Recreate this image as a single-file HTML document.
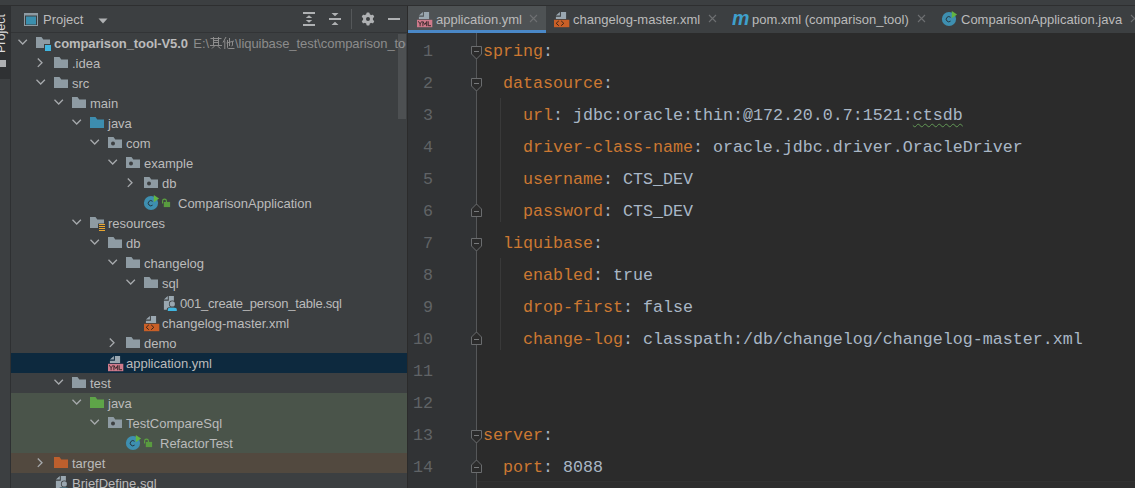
<!DOCTYPE html>
<html><head><meta charset="utf-8">
<style>
html,body{margin:0;padding:0}
body{width:1135px;height:488px;overflow:hidden;position:relative;background:#3c3f41;font-family:"Liberation Sans",sans-serif;}
.abs{position:absolute}
.ic{position:absolute;display:block}
.ic svg{display:block}
.rowbg{position:absolute;left:11px;width:396px;height:20px}
.tt{position:absolute;height:20px;line-height:20px;font-size:13px;color:#bbbbbb;white-space:nowrap}
.tt b{font-weight:bold}
.tt .path{color:#8c8c8c;letter-spacing:-0.06px}
.tt b{letter-spacing:-0.1px}
.ln{position:absolute;left:408px;width:25px;text-align:right;height:32px;line-height:32px;font-family:"Liberation Mono",monospace;font-size:16.6667px;color:#606366}
.cl{position:absolute;left:483px;height:32px;line-height:32px;font-family:"Liberation Mono",monospace;font-size:16.6667px;color:#a9b7c6;white-space:pre}
.typo{text-decoration:underline wavy #629755;text-decoration-thickness:1px;text-underline-offset:3px}
.tab{position:absolute;top:6px;height:27px;font-size:13px;color:#bbbbbb;line-height:27px;white-space:nowrap}
</style></head>
<body>
<!-- top strip line -->
<div class="abs" style="left:0;top:5px;width:1135px;height:1px;background:#2e2f30"></div>
<!-- left sidebar -->
<div class="abs" style="left:0;top:6px;width:10px;height:73px;background:#2f3133"></div>
<div class="abs" style="left:10px;top:6px;width:1px;height:482px;background:#2e3032"></div>
<div class="abs" style="left:-5px;top:53px;transform-origin:0 0;transform:rotate(-90deg);font-size:12.5px;color:#dcdcdc;line-height:13px;white-space:nowrap">Project</div>
<div class="abs" style="left:0;top:60px;width:6px;height:7px;background:#aeb0b2"></div>

<!-- project panel header -->
<div class="abs" style="left:11px;top:32px;width:396px;height:1px;background:#323436"></div>
<svg class="ic" style="left:23px;top:12px" width="16" height="16"><rect x="1.5" y="1.5" width="13" height="12" fill="none" stroke="#8e9ba3" stroke-width="1"/><rect x="1" y="1" width="14" height="2.5" fill="#8e9ba3"/><rect x="3" y="4.5" width="10" height="8" fill="#3b8fae"/></svg>
<div class="abs" style="left:43px;top:7px;line-height:26px;font-size:13px;color:#bbbbbb">Project</div>
<svg class="ic" style="left:98px;top:18px" width="10" height="6"><path d="M0.5 0.5H9.5L5 5.5Z" fill="#afb1b3"/></svg>
<!-- header icons -->
<svg class="ic" style="left:302px;top:11px" width="14" height="16"><rect x="1" y="1" width="12" height="2" fill="#afb1b3"/><rect x="1" y="13" width="12" height="2" fill="#afb1b3"/><path d="M3.8 7L7 4.3L10.2 7Z M3.8 9L7 11.7L10.2 9Z" fill="#afb1b3"/></svg>
<svg class="ic" style="left:328px;top:12px" width="14" height="14"><rect x="1" y="6" width="12" height="2" fill="#afb1b3"/><path d="M3.5 1H10.5L7 4.2Z M3.5 13H10.5L7 9.8Z" fill="#afb1b3"/></svg>
<div class="abs" style="left:351px;top:9px;width:1px;height:20px;background:#55585a"></div>
<svg class="ic" style="left:360px;top:11px" width="16" height="16"><g transform="translate(8,8)" fill="#afb1b3"><circle r="5"/><rect x="-1.6" y="-6.6" width="3.2" height="13.2" rx="1"/><rect x="-1.6" y="-6.6" width="3.2" height="13.2" rx="1" transform="rotate(60)"/><rect x="-1.6" y="-6.6" width="3.2" height="13.2" rx="1" transform="rotate(120)"/></g><circle cx="8" cy="8" r="2" fill="#3c3f41"/></svg>
<div class="abs" style="left:388px;top:18px;width:12px;height:2px;background:#afb1b3"></div>

<!-- tree -->
<svg class="ic" style="left:18px;top:39px" width="10" height="7"><polyline points="0.5,0.8 4.7,5 8.9,0.8" fill="none" stroke="#a7aaad" stroke-width="1.3"/></svg>
<div class="ic" style="left:36px;top:37px"><svg width="16" height="16"><path d="M0 0H5.5L7.3 2.5H14V7H8V11H0Z" fill="#8e9ba3"/><rect x="9" y="8" width="6" height="6" fill="#40b6e0"/></svg></div>
<div class="tt" style="left:54px;top:34px;width:352px;overflow:hidden"><b>comparison_tool-V5.0</b><span class="path" style="margin-left:5.5px">E:\<svg style="display:inline-block;vertical-align:-1px;margin:0 0 0 1px" width="25" height="12"><g fill="none" stroke="#8c8c8c" stroke-width="1"><path d="M0.5 1.5H11.5M3.5 0V8M8.5 0V8M3.5 3.5H8.5M3.5 5.5H8.5M0 8.5H12M4.5 9L2 11.5M7.5 9L10.5 11.5"/><path d="M16 0L13 5.5M14.8 3.5V12M16.5 6L24 4M19.5 1V9M17.5 3V10.5Q17.5 11.5 18.5 11.5H24.5M22.5 4.5V8Q22.5 9 21.5 9"/></g></svg>\liquibase_test\comparison_tool</span></div>
<svg class="ic" style="left:37px;top:58px" width="7" height="10"><polyline points="0.8,0.5 5,4.7 0.8,8.9" fill="none" stroke="#a7aaad" stroke-width="1.3"/></svg>
<div class="ic" style="left:54px;top:57px"><svg width="16" height="14"><path d="M0 0H5.5L7.3 2.5H14V11H0Z" fill="#8e9ba3"/></svg></div>
<div class="tt" style="left:72px;top:54px">.idea</div>
<svg class="ic" style="left:36px;top:79px" width="10" height="7"><polyline points="0.5,0.8 4.7,5 8.9,0.8" fill="none" stroke="#a7aaad" stroke-width="1.3"/></svg>
<div class="ic" style="left:54px;top:77px"><svg width="16" height="14"><path d="M0 0H5.5L7.3 2.5H14V11H0Z" fill="#8e9ba3"/></svg></div>
<div class="tt" style="left:72px;top:74px">src</div>
<svg class="ic" style="left:54px;top:99px" width="10" height="7"><polyline points="0.5,0.8 4.7,5 8.9,0.8" fill="none" stroke="#a7aaad" stroke-width="1.3"/></svg>
<div class="ic" style="left:72px;top:97px"><svg width="16" height="14"><path d="M0 0H5.5L7.3 2.5H14V11H0Z" fill="#8e9ba3"/></svg></div>
<div class="tt" style="left:90px;top:94px">main</div>
<svg class="ic" style="left:72px;top:119px" width="10" height="7"><polyline points="0.5,0.8 4.7,5 8.9,0.8" fill="none" stroke="#a7aaad" stroke-width="1.3"/></svg>
<div class="ic" style="left:90px;top:117px"><svg width="16" height="14"><path d="M0 0H5.5L7.3 2.5H14V11H0Z" fill="#3d8daf"/></svg></div>
<div class="tt" style="left:108px;top:114px">java</div>
<svg class="ic" style="left:90px;top:139px" width="10" height="7"><polyline points="0.5,0.8 4.7,5 8.9,0.8" fill="none" stroke="#a7aaad" stroke-width="1.3"/></svg>
<div class="ic" style="left:108px;top:137px"><svg width="16" height="14"><path d="M0 0H5.5L7.3 2.5H14V11H0Z" fill="#8e9ba3"/><circle cx="5" cy="6.5" r="2" fill="#3c3f41"/></svg></div>
<div class="tt" style="left:126px;top:134px">com</div>
<svg class="ic" style="left:108px;top:159px" width="10" height="7"><polyline points="0.5,0.8 4.7,5 8.9,0.8" fill="none" stroke="#a7aaad" stroke-width="1.3"/></svg>
<div class="ic" style="left:126px;top:157px"><svg width="16" height="14"><path d="M0 0H5.5L7.3 2.5H14V11H0Z" fill="#8e9ba3"/><circle cx="5" cy="6.5" r="2" fill="#3c3f41"/></svg></div>
<div class="tt" style="left:144px;top:154px">example</div>
<svg class="ic" style="left:127px;top:178px" width="7" height="10"><polyline points="0.8,0.5 5,4.7 0.8,8.9" fill="none" stroke="#a7aaad" stroke-width="1.3"/></svg>
<div class="ic" style="left:144px;top:177px"><svg width="16" height="14"><path d="M0 0H5.5L7.3 2.5H14V11H0Z" fill="#8e9ba3"/><circle cx="5" cy="6.5" r="2" fill="#3c3f41"/></svg></div>
<div class="tt" style="left:162px;top:174px">db</div>

<div class="ic" style="left:143px;top:194px"><svg width="30" height="17"><circle cx="8" cy="9" r="7.1" fill="#3e8fb0"/><path d="M9.6 7.3A2.6 2.6 0 1 0 9.6 11.1" fill="none" stroke="#253640" stroke-width="1"/><path d="M10.8 1V8.2L16.1 4.6Z" fill="#62b543"/><path d="M19.6 9.5V7A1.9 1.9 0 0 1 23.4 7V8.5" fill="none" stroke="#5da540" stroke-width="1.1"/><rect x="20.8" y="7.9" width="6.3" height="5.2" fill="#599b3f"/></svg></div>
<div class="tt" style="left:178px;top:194px">ComparisonApplication</div>
<svg class="ic" style="left:72px;top:219px" width="10" height="7"><polyline points="0.5,0.8 4.7,5 8.9,0.8" fill="none" stroke="#a7aaad" stroke-width="1.3"/></svg>
<div class="ic" style="left:90px;top:217px"><svg width="16" height="16"><path d="M0 0H5.5L7.3 2.5H14V6.5H8V11H0Z" fill="#8e9ba3"/><path d="M9 7.5H15M9 9.5H15M9 11.5H15M9 13.5H15" stroke="#e9a630" stroke-width="1.1"/></svg></div>
<div class="tt" style="left:108px;top:214px">resources</div>
<svg class="ic" style="left:90px;top:239px" width="10" height="7"><polyline points="0.5,0.8 4.7,5 8.9,0.8" fill="none" stroke="#a7aaad" stroke-width="1.3"/></svg>
<div class="ic" style="left:108px;top:237px"><svg width="16" height="14"><path d="M0 0H5.5L7.3 2.5H14V11H0Z" fill="#8e9ba3"/></svg></div>
<div class="tt" style="left:126px;top:234px">db</div>
<svg class="ic" style="left:108px;top:259px" width="10" height="7"><polyline points="0.5,0.8 4.7,5 8.9,0.8" fill="none" stroke="#a7aaad" stroke-width="1.3"/></svg>
<div class="ic" style="left:126px;top:257px"><svg width="16" height="14"><path d="M0 0H5.5L7.3 2.5H14V11H0Z" fill="#8e9ba3"/></svg></div>
<div class="tt" style="left:144px;top:254px">changelog</div>
<svg class="ic" style="left:126px;top:279px" width="10" height="7"><polyline points="0.5,0.8 4.7,5 8.9,0.8" fill="none" stroke="#a7aaad" stroke-width="1.3"/></svg>
<div class="ic" style="left:144px;top:277px"><svg width="16" height="14"><path d="M0 0H5.5L7.3 2.5H14V11H0Z" fill="#8e9ba3"/></svg></div>
<div class="tt" style="left:162px;top:274px">sql</div>

<div class="ic" style="left:162px;top:293px"><svg width="18" height="20"><path d="M6.8 3H11.9V16.8H1.9V7.8H6.8Z M1.9 6.6L5.8 3.1V6.6Z" fill="#9aa7b0"/><circle cx="10.3" cy="10.9" r="3.4" fill="#3c3f41"/><circle cx="10.3" cy="10.9" r="2.6" fill="#9aa7b0"/><path d="M4.8 19V16.8A2.5 2.5 0 0 1 7.3 14.2H13.2A2.5 2.5 0 0 1 15.7 16.8V19Z" fill="#3c3f41"/><path d="M5.8 18V16.6A1.8 1.8 0 0 1 7.6 14.8H13A1.8 1.8 0 0 1 14.8 16.6V18Z" fill="#40b6e0"/></svg></div>
<div class="tt" style="left:180px;top:294px;letter-spacing:-0.22px">001_create_person_table.sql</div>

<div class="ic" style="left:144px;top:315px"><svg width="17" height="17"><path d="M6.9 1H12.1V8H1.9V5.8H6.9Z M1.9 4.5L5.9 1.1V4.5Z" fill="#9aa7b0"/><rect x="0" y="8.8" width="15.3" height="7.4" fill="#c95f27"/><path d="M4.8 9.9L2.2 12.3L4.8 14.7M7.2 9.9L9.8 12.3L7.2 14.7" fill="none" stroke="#3a2418" stroke-width="1"/></svg></div>
<div class="tt" style="left:162px;top:314px">changelog-master.xml</div>
<svg class="ic" style="left:109px;top:338px" width="7" height="10"><polyline points="0.8,0.5 5,4.7 0.8,8.9" fill="none" stroke="#a7aaad" stroke-width="1.3"/></svg>
<div class="ic" style="left:126px;top:337px"><svg width="16" height="14"><path d="M0 0H5.5L7.3 2.5H14V11H0Z" fill="#8e9ba3"/></svg></div>
<div class="tt" style="left:144px;top:334px">demo</div>
<div class="rowbg" style="top:353px;background:#0d293e"></div>

<div class="ic" style="left:108px;top:355px"><svg width="17" height="17"><path d="M6.9 1H12.1V8H1.9V5.8H6.9Z M1.9 4.5L5.9 1.1V4.5Z" fill="#9aa7b0"/><rect x="0" y="8.8" width="15.3" height="7.4" fill="#cf7a8b"/><path d="M1.3 10.3L3.1 12.8L4.9 10.3M3.1 12.8V15.2M5.9 15.2V10.5L7.8 13.6L9.7 10.5V15.2M11.2 10.3V14.7H14" fill="none" stroke="#3b2a2e" stroke-width="1"/></svg></div>
<div class="tt" style="left:126px;top:354px">application.yml</div>
<svg class="ic" style="left:54px;top:379px" width="10" height="7"><polyline points="0.5,0.8 4.7,5 8.9,0.8" fill="none" stroke="#a7aaad" stroke-width="1.3"/></svg>
<div class="ic" style="left:72px;top:377px"><svg width="16" height="14"><path d="M0 0H5.5L7.3 2.5H14V11H0Z" fill="#8e9ba3"/></svg></div>
<div class="tt" style="left:90px;top:374px">test</div>
<div class="rowbg" style="top:393px;background:#4a544a"></div>
<svg class="ic" style="left:72px;top:399px" width="10" height="7"><polyline points="0.5,0.8 4.7,5 8.9,0.8" fill="none" stroke="#a7aaad" stroke-width="1.3"/></svg>
<div class="ic" style="left:90px;top:397px"><svg width="16" height="14"><path d="M0 0H5.5L7.3 2.5H14V11H0Z" fill="#5ea548"/></svg></div>
<div class="tt" style="left:108px;top:394px">java</div>
<div class="rowbg" style="top:413px;background:#4a544a"></div>
<svg class="ic" style="left:90px;top:419px" width="10" height="7"><polyline points="0.5,0.8 4.7,5 8.9,0.8" fill="none" stroke="#a7aaad" stroke-width="1.3"/></svg>
<div class="ic" style="left:108px;top:417px"><svg width="16" height="14"><path d="M0 0H5.5L7.3 2.5H14V11H0Z" fill="#8e9ba3"/><circle cx="5" cy="6.5" r="2" fill="#3c3f41"/></svg></div>
<div class="tt" style="left:126px;top:414px">TestCompareSql</div>
<div class="rowbg" style="top:433px;background:#4a544a"></div>

<div class="ic" style="left:125px;top:434px"><svg width="30" height="17"><circle cx="8" cy="9" r="7.1" fill="#3e8fb0"/><path d="M9.6 7.3A2.6 2.6 0 1 0 9.6 11.1" fill="none" stroke="#253640" stroke-width="1"/><path d="M10.8 1V8.2L16.1 4.6Z" fill="#62b543"/><path d="M19.6 9.5V7A1.9 1.9 0 0 1 23.4 7V8.5" fill="none" stroke="#5da540" stroke-width="1.1"/><rect x="20.8" y="7.9" width="6.3" height="5.2" fill="#599b3f"/></svg></div>
<div class="tt" style="left:160px;top:434px">RefactorTest</div>
<div class="rowbg" style="top:453px;background:#52493f"></div>
<svg class="ic" style="left:37px;top:458px" width="7" height="10"><polyline points="0.8,0.5 5,4.7 0.8,8.9" fill="none" stroke="#a7aaad" stroke-width="1.3"/></svg>
<div class="ic" style="left:54px;top:457px"><svg width="16" height="14"><path d="M0 0H5.5L7.3 2.5H14V11H0Z" fill="#bd5f2d"/></svg></div>
<div class="tt" style="left:72px;top:454px">target</div>

<div class="ic" style="left:54px;top:473px"><svg width="18" height="20"><path d="M6.8 3H11.9V16.8H1.9V7.8H6.8Z M1.9 6.6L5.8 3.1V6.6Z" fill="#9aa7b0"/><circle cx="10.3" cy="10.9" r="3.4" fill="#3c3f41"/><circle cx="10.3" cy="10.9" r="2.6" fill="#9aa7b0"/><path d="M4.8 19V16.8A2.5 2.5 0 0 1 7.3 14.2H13.2A2.5 2.5 0 0 1 15.7 16.8V19Z" fill="#3c3f41"/><path d="M5.8 18V16.6A1.8 1.8 0 0 1 7.6 14.8H13A1.8 1.8 0 0 1 14.8 16.6V18Z" fill="#40b6e0"/></svg></div>
<div class="tt" style="left:72px;top:474px">BriefDefine.sql</div>
<!-- tree scrollbar -->
<div class="abs" style="left:398px;top:34px;width:8px;height:85px;background:rgba(255,255,255,0.09)"></div>
<!-- panel/editor border -->
<div class="abs" style="left:407px;top:6px;width:1px;height:482px;background:#2b2b2b"></div>

<!-- editor -->
<div class="abs" style="left:408px;top:33px;width:727px;height:455px;background:#2b2b2b"></div>
<div class="abs" style="left:408px;top:33px;width:68px;height:455px;background:#313335"></div>
<div class="abs" style="left:476px;top:33px;width:1px;height:455px;background:#555759"></div>
<!-- indent guides -->
<div class="abs" style="left:500px;top:98px;width:1px;height:124px;background:#393939"></div>
<div class="abs" style="left:500px;top:258px;width:1px;height:92px;background:#393939"></div>
<div class="abs" style="left:477px;top:481px;width:658px;height:7px;background:#2e2e2e;border-top:1px solid #323232"></div>
<div class="ln" style="top:36px">1</div>
<div class="cl" style="top:36px"><span style="color:#cc7832">spring</span><span style="color:#a9b7c6">:</span></div>
<div class="ln" style="top:68px">2</div>
<div class="cl" style="top:68px">  <span style="color:#cc7832">datasource</span><span style="color:#a9b7c6">:</span></div>
<div class="ln" style="top:100px">3</div>
<div class="cl" style="top:100px">    <span style="color:#cc7832">url</span><span style="color:#a9b7c6">: jdbc:oracle:thin:@172.20.0.7:1521:<span class="typo">ctsdb</span></span></div>
<div class="ln" style="top:132px">4</div>
<div class="cl" style="top:132px">    <span style="color:#cc7832">driver-class-name</span><span style="color:#a9b7c6">: oracle.jdbc.driver.OracleDriver</span></div>
<div class="ln" style="top:164px">5</div>
<div class="cl" style="top:164px">    <span style="color:#cc7832">username</span><span style="color:#a9b7c6">: CTS_DEV</span></div>
<div class="ln" style="top:196px">6</div>
<div class="cl" style="top:196px">    <span style="color:#cc7832">password</span><span style="color:#a9b7c6">: CTS_DEV</span></div>
<div class="ln" style="top:228px">7</div>
<div class="cl" style="top:228px">  <span style="color:#cc7832">liquibase</span><span style="color:#a9b7c6">:</span></div>
<div class="ln" style="top:260px">8</div>
<div class="cl" style="top:260px">    <span style="color:#cc7832">enabled</span><span style="color:#a9b7c6">: true</span></div>
<div class="ln" style="top:292px">9</div>
<div class="cl" style="top:292px">    <span style="color:#cc7832">drop-first</span><span style="color:#a9b7c6">: false</span></div>
<div class="ln" style="top:324px">10</div>
<div class="cl" style="top:324px">    <span style="color:#cc7832">change-log</span><span style="color:#a9b7c6">: classpath:/db/changelog/changelog-master.xml</span></div>
<div class="ln" style="top:356px">11</div>
<div class="cl" style="top:356px"></div>
<div class="ln" style="top:388px">12</div>
<div class="cl" style="top:388px"></div>
<div class="ln" style="top:420px">13</div>
<div class="cl" style="top:420px"><span style="color:#cc7832">server</span><span style="color:#a9b7c6">:</span></div>
<div class="ln" style="top:452px">14</div>
<div class="cl" style="top:452px">  <span style="color:#cc7832">port</span><span style="color:#a9b7c6">: 8088</span></div>
<svg class="ic" style="left:470px;top:45px" width="13" height="16"><path d="M1.5 1.5H11.5V9L6.5 14L1.5 9Z" fill="#2b2b2b" stroke="#6a6c6e" stroke-width="1"/><path d="M4 6.5H9" stroke="#77797b" stroke-width="1"/></svg>
<svg class="ic" style="left:470px;top:77px" width="13" height="16"><path d="M1.5 1.5H11.5V9L6.5 14L1.5 9Z" fill="#2b2b2b" stroke="#6a6c6e" stroke-width="1"/><path d="M4 6.5H9" stroke="#77797b" stroke-width="1"/></svg>
<svg class="ic" style="left:470px;top:237px" width="13" height="16"><path d="M1.5 1.5H11.5V9L6.5 14L1.5 9Z" fill="#2b2b2b" stroke="#6a6c6e" stroke-width="1"/><path d="M4 6.5H9" stroke="#77797b" stroke-width="1"/></svg>
<svg class="ic" style="left:470px;top:429px" width="13" height="16"><path d="M1.5 1.5H11.5V9L6.5 14L1.5 9Z" fill="#2b2b2b" stroke="#6a6c6e" stroke-width="1"/><path d="M4 6.5H9" stroke="#77797b" stroke-width="1"/></svg>
<svg class="ic" style="left:470px;top:202px" width="13" height="16"><path d="M1.5 14.5H11.5V7L6.5 2L1.5 7Z" fill="#2b2b2b" stroke="#6a6c6e" stroke-width="1"/><path d="M4 9.5H9" stroke="#77797b" stroke-width="1"/></svg>
<svg class="ic" style="left:470px;top:330px" width="13" height="16"><path d="M1.5 14.5H11.5V7L6.5 2L1.5 7Z" fill="#2b2b2b" stroke="#6a6c6e" stroke-width="1"/><path d="M4 9.5H9" stroke="#77797b" stroke-width="1"/></svg>
<svg class="ic" style="left:470px;top:458px" width="13" height="16"><path d="M1.5 14.5H11.5V7L6.5 2L1.5 7Z" fill="#2b2b2b" stroke="#6a6c6e" stroke-width="1"/><path d="M4 9.5H9" stroke="#77797b" stroke-width="1"/></svg>

<!-- tabs -->
<div class="abs" style="left:408px;top:6px;width:138px;height:24px;background:#4e5254"></div>
<div class="abs" style="left:408px;top:30px;width:138px;height:3px;background:#4a88c7"></div>
<div class="ic" style="left:417px;top:11px"><svg width="17" height="17"><path d="M6.9 1H12.1V8H1.9V5.8H6.9Z M1.9 4.5L5.9 1.1V4.5Z" fill="#9aa7b0"/><rect x="0" y="8.8" width="15.3" height="7.4" fill="#cf7a8b"/><path d="M1.3 10.3L3.1 12.8L4.9 10.3M3.1 12.8V15.2M5.9 15.2V10.5L7.8 13.6L9.7 10.5V15.2M11.2 10.3V14.7H14" fill="none" stroke="#3b2a2e" stroke-width="1"/></svg></div>
<div class="tab" style="left:436px">application.yml</div>
<svg class="ic" style="left:529px;top:14px" width="10" height="10"><path d="M1 1L8 8M8 1L1 8" stroke="#6e7072" stroke-width="1.1"/></svg>

<div class="ic" style="left:554px;top:11px"><svg width="17" height="17"><path d="M6.9 1H12.1V8H1.9V5.8H6.9Z M1.9 4.5L5.9 1.1V4.5Z" fill="#9aa7b0"/><rect x="0" y="8.8" width="15.3" height="7.4" fill="#c95f27"/><path d="M4.8 9.9L2.2 12.3L4.8 14.7M7.2 9.9L9.8 12.3L7.2 14.7" fill="none" stroke="#3a2418" stroke-width="1"/></svg></div>
<div class="tab" style="left:573px">changelog-master.xml</div>
<svg class="ic" style="left:708px;top:14px" width="10" height="10"><path d="M1 1L8 8M8 1L1 8" stroke="#6e7072" stroke-width="1.1"/></svg>

<div class="abs" style="left:732px;top:8px;color:#3fa0cc;font-weight:bold;font-style:italic;font-size:20px;line-height:20px;transform:scaleX(0.98);transform-origin:0 0">m</div>
<div class="tab" style="left:752px">pom.xml (comparison_tool)</div>
<svg class="ic" style="left:917px;top:14px" width="10" height="10"><path d="M1 1L8 8M8 1L1 8" stroke="#6e7072" stroke-width="1.1"/></svg>

<div class="ic" style="left:941px;top:10px"><svg width="17" height="17"><circle cx="8" cy="9" r="7.1" fill="#3e8fb0"/><path d="M9.6 7.3A2.6 2.6 0 1 0 9.6 11.1" fill="none" stroke="#253640" stroke-width="1"/><path d="M10.8 1V8.2L16.1 4.6Z" fill="#62b543"/></svg></div>
<div class="tab" style="left:961px">ComparisonApplication.java</div>
<svg class="ic" style="left:1130px;top:14px" width="10" height="10"><path d="M1 1L8 8M8 1L1 8" stroke="#6e7072" stroke-width="1.1"/></svg>
</body></html>
